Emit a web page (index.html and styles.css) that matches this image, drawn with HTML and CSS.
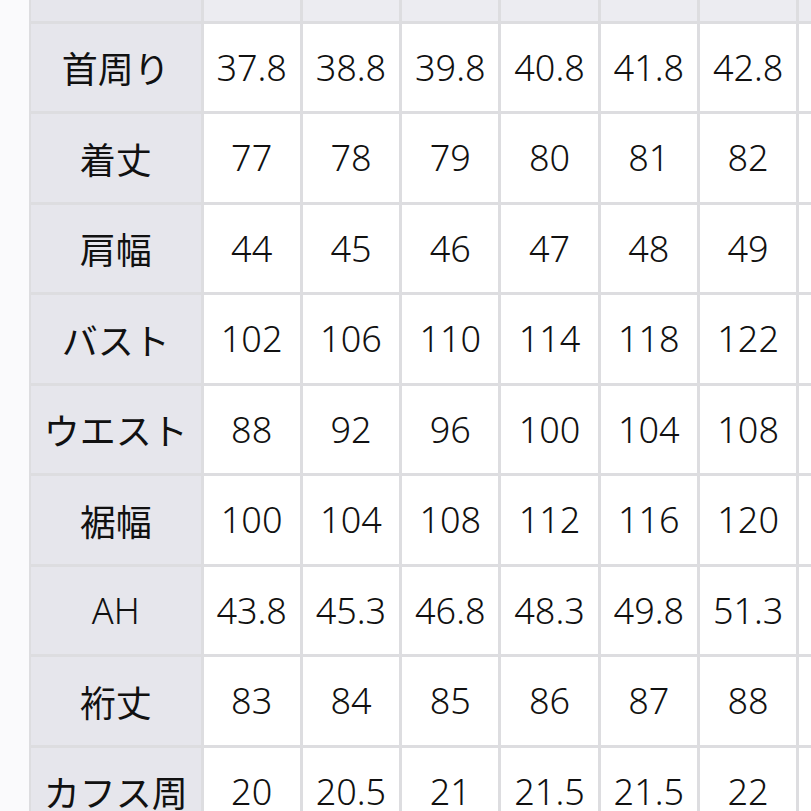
FILE: index.html
```html
<!DOCTYPE html>
<html lang="ja">
<head>
<meta charset="utf-8">
<title>サイズ表</title>
<link rel="stylesheet" href="styles.css">
</head>
<body>
<div class="viewport">
  <div class="table">
    <div class="cell head top"></div>
    <div class="cell top"></div><div class="cell top"></div><div class="cell top"></div><div class="cell top"></div><div class="cell top"></div><div class="cell top"></div><div class="cell top"></div>

    <div class="cell head">首周り</div>
    <div class="cell num">37.8</div><div class="cell num">38.8</div><div class="cell num">39.8</div><div class="cell num">40.8</div><div class="cell num">41.8</div><div class="cell num">42.8</div><div class="cell num"></div>

    <div class="cell head">着丈</div>
    <div class="cell num">77</div><div class="cell num">78</div><div class="cell num">79</div><div class="cell num">80</div><div class="cell num">81</div><div class="cell num">82</div><div class="cell num"></div>

    <div class="cell head">肩幅</div>
    <div class="cell num">44</div><div class="cell num">45</div><div class="cell num">46</div><div class="cell num">47</div><div class="cell num">48</div><div class="cell num">49</div><div class="cell num"></div>

    <div class="cell head">バスト</div>
    <div class="cell num">102</div><div class="cell num">106</div><div class="cell num">110</div><div class="cell num">114</div><div class="cell num">118</div><div class="cell num">122</div><div class="cell num"></div>

    <div class="cell head">ウエスト</div>
    <div class="cell num">88</div><div class="cell num">92</div><div class="cell num">96</div><div class="cell num">100</div><div class="cell num">104</div><div class="cell num">108</div><div class="cell num"></div>

    <div class="cell head">裾幅</div>
    <div class="cell num">100</div><div class="cell num">104</div><div class="cell num">108</div><div class="cell num">112</div><div class="cell num">116</div><div class="cell num">120</div><div class="cell num"></div>

    <div class="cell head latin">AH</div>
    <div class="cell num">43.8</div><div class="cell num">45.3</div><div class="cell num">46.8</div><div class="cell num">48.3</div><div class="cell num">49.8</div><div class="cell num">51.3</div><div class="cell num"></div>

    <div class="cell head">裄丈</div>
    <div class="cell num">83</div><div class="cell num">84</div><div class="cell num">85</div><div class="cell num">86</div><div class="cell num">87</div><div class="cell num">88</div><div class="cell num"></div>

    <div class="cell head">カフス周</div>
    <div class="cell num">20</div><div class="cell num">20.5</div><div class="cell num">21</div><div class="cell num">21.5</div><div class="cell num">21.5</div><div class="cell num">22</div><div class="cell num"></div>
  </div>
</div>
</body>
</html>
```

FILE: styles.css
```css
html, body {
  margin: 0;
  padding: 0;
  background: #fafafc;
}
.viewport {
  width: 811px;
  height: 811px;
  overflow: hidden;
}
.table {
  display: grid;
  grid-template-columns: 169.5px repeat(6, 96.3px) 60px;
  grid-auto-rows: 87.5px;
  gap: 3px;
  margin-top: -67px;
  margin-left: 29px;
  padding-left: 2px;
  background: #dddde0;
  width: max-content;
}
.cell {
  display: flex;
  align-items: center;
  justify-content: center;
  background: #ffffff;
  color: #111111;
  white-space: nowrap;
}
.head {
  background: #e6e6ec;
  font-family: "Noto Sans CJK JP", "Noto Sans", sans-serif;
  font-size: 36px;
  font-weight: 400;
}
.head.latin {
  font-family: "Noto Sans", "Noto Sans CJK JP", sans-serif;
  font-size: 36px;
  font-weight: 300;
}
.top {
  background: #ececf1;
}
.head.top {
  background: #e6e6ec;
}
.num {
  font-family: "Noto Sans", "Noto Sans CJK JP", sans-serif;
  font-size: 36px;
  font-weight: 300;
}
```
